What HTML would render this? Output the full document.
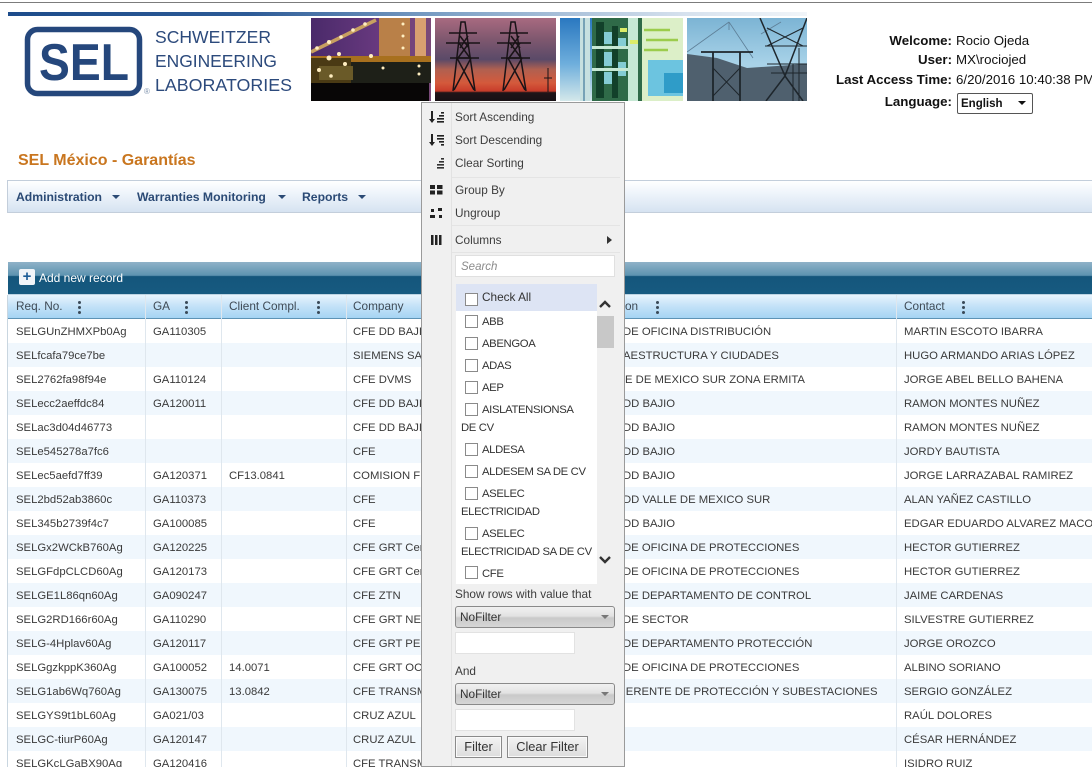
<!DOCTYPE html>
<html lang="es"><head><meta charset="utf-8"><title>SEL México - Garantías</title>
<style>
html,body{margin:0;padding:0;width:1092px;height:767px;overflow:hidden;background:#fff;position:relative;font-family:"Liberation Sans",sans-serif;color:#333}
.abs,.abs *{box-sizing:border-box}
.abs{position:absolute}
.u{position:absolute;font-size:13.3px;line-height:16px;color:#111;white-space:nowrap}
.u.l{font-weight:bold;right:calc(1092px - 952px)}
.u.v{left:956px}
.mi{position:absolute;left:0;top:0;font-size:12.2px;font-weight:bold;color:#2b4a75;white-space:nowrap;line-height:16px}
.tri{position:absolute;width:0;height:0;border-left:4px solid transparent;border-right:4px solid transparent;border-top:4px solid #2b4a75}
.r{position:absolute;left:8px;width:1084px;height:24px;background:#fff;overflow:hidden}
.r.t{background:#f0f7fd}
.r i{position:absolute;top:1px;font-style:normal;font-size:11.3px;line-height:24px;color:#3a3a3a;white-space:nowrap}
.r .a{left:8px}.r .b{left:145px}.r .c{left:221px}.r .d{left:345px}.r .f{left:896px}
.vl{position:absolute;top:295px;height:472px;width:1px;background:#dfe7ee}
.hc{position:absolute;top:295px;height:24px;line-height:22px;font-size:11.8px;color:#3f4a55;white-space:nowrap}
.dots{position:absolute;top:301px;width:3px;height:13px}
.dots b{display:block;width:3px;height:3px;border-radius:50%;background:#3a4a58;margin-bottom:2px}
.m{position:absolute;left:33px;font-size:11.8px;line-height:16px;color:#3d3d3d;white-space:nowrap}
.li{position:absolute;font-size:11.3px;letter-spacing:-.35px;line-height:16px;color:#333;white-space:nowrap}
.cb{position:absolute;width:13px;height:13px;border:1px solid #8a8a8a;background:#fff}
.sel{position:absolute;left:33px;width:160px;height:22px;border:1px solid #8a8a8a;border-radius:3px;background:linear-gradient(#f1f1f1,#e2e2e2 45%,#c9c9c9 55%,#d6d6d6);font-size:11.8px;line-height:20px;padding-left:4px;color:#333}
.sel:after{content:"";position:absolute;right:5px;top:8px;border-left:4px solid transparent;border-right:4px solid transparent;border-top:4px solid #777}
.inp{position:absolute;left:33px;width:120px;height:22px;background:#fff;border:1px solid #e2e2e2}
.btn{position:absolute;top:633px;height:22px;border:1px solid #8a8a8a;background:linear-gradient(#f3f3f3,#dcdcdc);box-shadow:inset 0 0 0 1px #fafafa;font-size:12.8px;line-height:20px;text-align:center;color:#333}
</style></head><body>

<div class="abs" style="left:0;top:2px;width:1092px;height:1px;background:#7c7c7c"></div>
<div class="abs" style="left:8px;top:12px;width:799px;height:4px;background:linear-gradient(90deg,#1d4c8b,#2c5a96 30%,#7ea1c6 55%,#d7e2ee 85%,#f1f5f9)"></div>

<svg class="abs" style="left:20px;top:22px" width="280" height="78" viewBox="0 0 280 78">
<rect x="7.500" y="7.500" width="112" height="64" rx="10" fill="#fff" stroke="#25477c" stroke-width="5.500"/>
<text x="19" y="58" font-family="Liberation Sans" font-weight="bold" font-size="52" fill="#25477c" textLength="90" lengthAdjust="spacingAndGlyphs">SEL</text>
<text x="124" y="72" font-family="Liberation Sans" font-size="8" fill="#7f93ad">®</text>
<g font-family="Liberation Sans" font-size="17.500" fill="#2c4a7c">
<text x="135" y="21" textLength="116" lengthAdjust="spacingAndGlyphs">SCHWEITZER</text>
<text x="135" y="45" textLength="122" lengthAdjust="spacingAndGlyphs">ENGINEERING</text>
<text x="135" y="69" textLength="137" lengthAdjust="spacingAndGlyphs">LABORATORIES</text>
</g></svg>

<svg class="abs" style="left:311px;top:18px" width="120" height="83" viewBox="0 0 120 83">
<defs><linearGradient id="p1" x1="0" y1="0" x2="1" y2="0"><stop offset="0" stop-color="#4a2a6a"/><stop offset=".6" stop-color="#6a3a80"/><stop offset="1" stop-color="#7a4a78"/></linearGradient></defs>
<rect width="120" height="83" fill="url(#p1)"/>
<rect x="68" y="0" width="31" height="40" fill="#b98048"/><rect x="104" y="0" width="11" height="38" fill="#d8a070"/>
<path d="M0 34L65 2" stroke="#c8a060" stroke-width="3.500"/>
<rect x="0" y="38" width="120" height="7" fill="#a8701e"/>
<rect x="0" y="40" width="40" height="25" fill="#4a3a14"/>
<rect x="40" y="44" width="80" height="21" fill="#1e2018"/>
<rect x="8" y="48" width="34" height="14" fill="#6a5a28"/>
<g fill="#ffeec0"><circle cx="6" cy="30" r="1.800"/><circle cx="18" cy="24" r="2"/><circle cx="30" cy="19" r="1.800"/><circle cx="42" cy="12" r="1.800"/><circle cx="54" cy="6" r="1.800"/><circle cx="18" cy="40" r="2.500"/><circle cx="28" cy="36" r="2"/><circle cx="34" cy="46" r="2"/><circle cx="8" cy="52" r="2"/><circle cx="20" cy="58" r="1.800"/><circle cx="60" cy="38" r="2"/><circle cx="108" cy="56" r="1.500"/><circle cx="108" cy="48" r="1.500"/><circle cx="92" cy="6" r="1.500"/><circle cx="92" cy="18" r="1.500"/><circle cx="92" cy="30" r="1.500"/><circle cx="72" cy="50" r="1.500"/></g>
<rect x="0" y="65" width="118" height="18" fill="#080606"/>
</svg>

<svg class="abs" style="left:435px;top:18px" width="121" height="83" viewBox="0 0 121 83">
<defs><linearGradient id="p2" x1="0" y1="0" x2="0" y2="1"><stop offset="0" stop-color="#a86a80"/><stop offset=".25" stop-color="#80586f"/><stop offset=".5" stop-color="#5a4a68"/><stop offset=".62" stop-color="#b06050"/><stop offset=".78" stop-color="#d45a3c"/><stop offset=".88" stop-color="#c83c2a"/><stop offset=".9" stop-color="#201418"/><stop offset="1" stop-color="#181014"/></linearGradient></defs>
<rect width="121" height="83" fill="url(#p2)"/>
<g fill="none" stroke="#191317" stroke-width="1.500">
<path d="M18 73L26 4h4L40 73M19 72L36 40M39 72L22 40M22 40h14M24 25L35 40M34 25L23 40M25 18L34 30M33 18L25 30"/>
<path d="M14 15h28M11 25h34M15 40h29"/>
<path d="M68 73L76 4h4L91 73M69 72L87 40M90 72L73 40M73 40h14M75 25L86 40M85 25L74 40M76 18L85 30M84 18L76 30"/>
<path d="M65 15h28M62 25h34M66 40h29"/>
<path d="M113 50v24M109 60h8" stroke-width="1"/>
</g>
</svg>

<svg class="abs" style="left:560px;top:18px" width="123" height="83" viewBox="0 0 123 83">
<defs><linearGradient id="p3" x1="0" y1="0" x2="0" y2="1"><stop offset="0" stop-color="#2a78c0"/><stop offset=".55" stop-color="#6eaedc"/><stop offset="1" stop-color="#d4e8ea"/></linearGradient></defs>
<rect width="123" height="83" fill="url(#p3)"/>
<rect x="82" y="0" width="41" height="83" fill="#dcefc8"/>
<rect x="88" y="42" width="35" height="36" fill="#6cc4e0"/>
<rect x="104" y="55" width="19" height="20" fill="#2f9cc8"/>
<path d="M84 12h26M86 22h32M84 32h24" stroke="#9ccc4c" stroke-width="2.500"/>
<rect x="20" y="0" width="10" height="83" fill="#c6e0e0"/>
<path d="M24 0v83" stroke="#5c8ea8" stroke-width="1.500"/>
<rect x="32" y="0" width="50" height="83" fill="#2f6a48"/>
<g fill="#12402a"><rect x="36" y="4" width="8" height="76"/><rect x="52" y="8" width="6" height="72"/></g>
<g fill="#84ccd4"><rect x="44" y="14" width="8" height="12"/><rect x="44" y="34" width="8" height="14"/><rect x="58" y="20" width="8" height="10"/><rect x="44" y="54" width="8" height="12"/><rect x="58" y="44" width="8" height="14"/></g>
<g fill="#c6e8d4"><rect x="32" y="28" width="40" height="3"/><rect x="32" y="50" width="40" height="3"/><rect x="68" y="0" width="10" height="83"/></g>
<g fill="#dcec68"><rect x="60" y="10" width="7" height="4"/><rect x="70" y="22" width="8" height="4"/></g>
</svg>

<svg class="abs" style="left:687px;top:18px" width="120" height="83" viewBox="0 0 120 83">
<defs><linearGradient id="p4" x1="0" y1="0" x2="0" y2="1"><stop offset="0" stop-color="#7cb4d4"/><stop offset=".55" stop-color="#a8d2e8"/></linearGradient></defs>
<rect width="120" height="83" fill="url(#p4)"/>
<path d="M0 36L30 40 60 50 90 48 120 46V83H0Z" fill="#4f606e"/>
<path d="M0 34L42 4M42 4L42 12M94 4l-20 12M66 40L42 4" fill="none" stroke="#5e7f97" stroke-width=".8"/>
<g fill="none" stroke="#1e262c"><path stroke-width="1.800" d="M14 34h52M26 34v49M53 34v49"/><path stroke-width="1" d="M26 78L53 50M53 78L26 50"/>
<path stroke-width="1.500" d="M73 0l25 58M120 0L98 58M98 58L79 83M98 58l18 25"/>
<path stroke-width="1" d="M78 28h42M80 46h40M84 55h36M80 10l36 18M116 10L80 28M106 46v37M112 30v53"/></g>
</svg>

<div class="u l" style="top:33px">Welcome:</div><div class="u v" style="top:33px">Rocio Ojeda</div>
<div class="u l" style="top:52px">User:</div><div class="u v" style="top:52px">MX\rociojed</div>
<div class="u l" style="top:72px">Last Access Time:</div><div class="u v" style="top:72px">6/20/2016 10:40:38 PM</div>
<div class="u l" style="top:94px">Language:</div>
<div class="abs" style="left:957px;top:93px;width:76px;height:21px;border:1px solid #555;border-radius:2px;background:#fff;font-size:11.500px;font-weight:bold;line-height:20px;padding-left:3px;color:#111">English<span class="tri" style="left:60px;top:7px;border-top-color:#111"></span></div>

<div class="abs" style="left:18px;top:152px;font-size:16px;font-weight:bold;line-height:17px;color:#c9761f;white-space:nowrap">SEL México - Garantías</div>

<div class="abs" style="left:7px;top:180px;width:1085px;height:33px;border:1px solid #c3cedb;border-right:0;background:linear-gradient(#fff,#eef4fb 40%,#d6e3f1)"></div>
<div class="mi" style="left:16px;top:189px">Administration</div><span class="tri" style="left:112px;top:195px"></span>
<div class="mi" style="left:137px;top:189px">Warranties Monitoring</div><span class="tri" style="left:278px;top:195px"></span>
<div class="mi" style="left:302px;top:189px">Reports</div><span class="tri" style="left:358px;top:195px"></span>

<div class="abs" style="left:8px;top:262px;width:1084px;height:33px;background:linear-gradient(#8fb2c8 0,#5d93b0 42%,#14567c 45%,#175a80 100%);border-bottom:1px solid #bcd3e2"></div>
<div class="abs" style="left:19px;top:269px;width:16px;height:16px;border-radius:2px;background:#f1f4f8;color:#1d5c96;font-size:15px;font-weight:bold;line-height:15px;text-align:center">+</div>
<div class="abs" style="left:39px;top:270px;font-size:12px;line-height:16px;color:#fff;white-space:nowrap">Add new record</div>

<div class="abs" style="left:8px;top:295px;width:1084px;height:24px;background:linear-gradient(#e8f4fd,#c6e3f8 45%,#a5d4f3);border-bottom:1px solid #5d93b5"></div>
<div class="hc" style="left:16px">Req. No.</div><div class="dots" style="left:78px"><b></b><b></b><b></b></div>
<div class="hc" style="left:153px">GA</div><div class="dots" style="left:185px"><b></b><b></b><b></b></div>
<div class="hc" style="left:229px">Client Compl.</div><div class="dots" style="left:317px"><b></b><b></b><b></b></div>
<div class="hc" style="left:353px">Company</div>
<div class="hc" style="left:625px">on</div><div class="dots" style="left:656px"><b></b><b></b><b></b></div>
<div class="hc" style="left:904px">Contact</div><div class="dots" style="left:962px"><b></b><b></b><b></b></div>

<div class="r" style="top:319px"><i class="a">SELGUnZHMXPb0Ag</i><i class="b">GA110305</i><i class="d">CFE DD BAJIO</i><i style="left:615px">DE OFICINA DISTRIBUCIÓN</i><i class="f">MARTIN ESCOTO IBARRA</i></div>
<div class="r t" style="top:343px"><i class="a">SELfcafa79ce7be</i><i class="d">SIEMENS SA</i><i style="left:615px">AESTRUCTURA Y CIUDADES</i><i class="f">HUGO ARMANDO ARIAS LÓPEZ</i></div>
<div class="r" style="top:367px"><i class="a">SEL2762fa98f94e</i><i class="b">GA110124</i><i class="d">CFE DVMS</i><i style="left:617px">E DE MEXICO SUR ZONA ERMITA</i><i class="f">JORGE ABEL BELLO BAHENA</i></div>
<div class="r t" style="top:391px"><i class="a">SELecc2aeffdc84</i><i class="b">GA120011</i><i class="d">CFE DD BAJIO</i><i style="left:615px">DD BAJIO</i><i class="f">RAMON MONTES NUÑEZ</i></div>
<div class="r" style="top:415px"><i class="a">SELac3d04d46773</i><i class="d">CFE DD BAJIO</i><i style="left:615px">DD BAJIO</i><i class="f">RAMON MONTES NUÑEZ</i></div>
<div class="r t" style="top:439px"><i class="a">SELe545278a7fc6</i><i class="d">CFE</i><i style="left:615px">DD BAJIO</i><i class="f">JORDY BAUTISTA</i></div>
<div class="r" style="top:463px"><i class="a">SELec5aefd7ff39</i><i class="b">GA120371</i><i class="c">CF13.0841</i><i class="d">COMISION F</i><i style="left:615px">DD BAJIO</i><i class="f">JORGE LARRAZABAL RAMIREZ</i></div>
<div class="r t" style="top:487px"><i class="a">SEL2bd52ab3860c</i><i class="b">GA110373</i><i class="d">CFE</i><i style="left:615px">DD VALLE DE MEXICO SUR</i><i class="f">ALAN YAÑEZ CASTILLO</i></div>
<div class="r" style="top:511px"><i class="a">SEL345b2739f4c7</i><i class="b">GA100085</i><i class="d">CFE</i><i style="left:615px">DD BAJIO</i><i class="f">EDGAR EDUARDO ALVAREZ MACOTELA</i></div>
<div class="r t" style="top:535px"><i class="a">SELGx2WCkB760Ag</i><i class="b">GA120225</i><i class="d">CFE GRT Cen</i><i style="left:615px">DE OFICINA DE PROTECCIONES</i><i class="f">HECTOR GUTIERREZ</i></div>
<div class="r" style="top:559px"><i class="a">SELGFdpCLCD60Ag</i><i class="b">GA120173</i><i class="d">CFE GRT Cen</i><i style="left:615px">DE OFICINA DE PROTECCIONES</i><i class="f">HECTOR GUTIERREZ</i></div>
<div class="r t" style="top:583px"><i class="a">SELGE1L86qn60Ag</i><i class="b">GA090247</i><i class="d">CFE ZTN</i><i style="left:615px">DE DEPARTAMENTO DE CONTROL</i><i class="f">JAIME CARDENAS</i></div>
<div class="r" style="top:607px"><i class="a">SELG2RD166r60Ag</i><i class="b">GA110290</i><i class="d">CFE GRT NE</i><i style="left:615px">DE SECTOR</i><i class="f">SILVESTRE GUTIERREZ</i></div>
<div class="r t" style="top:631px"><i class="a">SELG-4Hplav60Ag</i><i class="b">GA120117</i><i class="d">CFE GRT PEN</i><i style="left:615px">DE DEPARTAMENTO PROTECCIÓN</i><i class="f">JORGE OROZCO</i></div>
<div class="r" style="top:655px"><i class="a">SELGgzkppK360Ag</i><i class="b">GA100052</i><i class="c">14.0071</i><i class="d">CFE GRT OCC</i><i style="left:615px">DE OFICINA DE PROTECCIONES</i><i class="f">ALBINO SORIANO</i></div>
<div class="r t" style="top:679px"><i class="a">SELG1ab6Wq760Ag</i><i class="b">GA130075</i><i class="c">13.0842</i><i class="d">CFE TRANSM</i><i style="left:609px">GERENTE DE PROTECCIÓN Y SUBESTACIONES</i><i class="f">SERGIO GONZÁLEZ</i></div>
<div class="r" style="top:703px"><i class="a">SELGYS9t1bL60Ag</i><i class="b">GA021/03</i><i class="d">CRUZ AZUL</i><i class="f">RAÚL DOLORES</i></div>
<div class="r t" style="top:727px"><i class="a">SELGC-tiurP60Ag</i><i class="b">GA120147</i><i class="d">CRUZ AZUL</i><i class="f">CÉSAR HERNÁNDEZ</i></div>
<div class="r" style="top:751px"><i class="a">SELGKcLGaBX90Ag</i><i class="b">GA120416</i><i class="d">CFE TRANSM</i><i class="f">ISIDRO RUIZ</i></div>

<div class="vl" style="left:7px;background:#c9d6e0"></div>
<div class="vl" style="left:145px"></div><div class="vl" style="left:221px"></div><div class="vl" style="left:346px"></div><div class="vl" style="left:896px"></div>

<!-- Context menu -->
<div class="abs" style="left:421px;top:102px;width:204px;height:665px;background:#f0f0f0;border:1px solid #9a9a9a;overflow:hidden">
<div class="abs" style="left:29px;top:0;width:1px;height:665px;background:#e2e2e2"></div>

<svg class="abs" style="left:6px;top:6px" width="18" height="140" viewBox="0 0 18 140" fill="#222" stroke="none">
<path d="M3 2h2v8h2l-3 4-3-4h2z"/><path d="M13 3h3v1.600h-3zM11 6h5v1.600h-5zM9 9h7v1.600H9zM9 12h7v1.600H9z"/>
<path d="M3 25h2v8h2l-3 4-3-4h2z"/><path d="M9 26h7v1.600H9zM9 29h7v1.600H9zM11 32h5v1.600h-5zM13 35h3v1.600h-3z"/>
<path d="M13 49h3v1.600h-3zM11 52h5v1.600h-5zM9 55h7v1.600H9zM9 58h7v1.600H9z" fill="#333"/>
<path d="M2 76h5v4H2zM9 76h5.500v4H9zM2 81.500h5v4H2zM9 81.500h5.500v4H9z"/>
<path d="M3 100h3v3H3zM10 99h4v3h-4zM2 106h5v3H2zM11 106h3v3h-3z"/>
<path d="M3 126h2.500v10H3zM7 126h2.500v10H7zM11 126h2.500v10H11z"/>
</svg>

<div class="m" style="top:6px">Sort Ascending</div>
<div class="m" style="top:29px">Sort Descending</div>
<div class="m" style="top:52px">Clear Sorting</div>
<div class="abs" style="left:30px;top:74px;width:168px;height:1px;background:#e4e4e4"></div>
<div class="m" style="top:79px">Group By</div>
<div class="m" style="top:102px">Ungroup</div>
<div class="abs" style="left:30px;top:122px;width:168px;height:1px;background:#e4e4e4"></div>
<div class="m" style="top:129px">Columns</div>
<div class="abs" style="left:185px;top:133px;border-top:4px solid transparent;border-bottom:4px solid transparent;border-left:5px solid #333"></div>
<div class="abs" style="left:30px;top:149px;width:168px;height:1px;background:#e4e4e4"></div>

<div class="abs" style="left:33px;top:152px;width:160px;height:22px;background:#fff;border:1px solid #e0e0e0;padding-left:5px;font-size:11.500px;font-style:italic;line-height:22px;color:#8a8a8a">Search</div>

<div class="abs" style="left:34px;top:181px;width:159px;height:300px;background:#fff"></div>
<div class="abs" style="left:34px;top:181px;width:141px;height:27px;background:#dde4f4"></div>
<div class="abs" style="left:175px;top:181px;width:18px;height:300px;background:#f0f0f0"></div>
<div class="abs" style="left:175px;top:213px;width:17px;height:32px;background:#c8c8c8"></div>
<svg class="abs" style="left:176px;top:194px" width="14" height="14" viewBox="0 0 14 14"><path d="M2 10L7 5l5 5" fill="none" stroke="#333" stroke-width="2.400"/></svg>
<svg class="abs" style="left:176px;top:450px" width="14" height="14" viewBox="0 0 14 14"><path d="M2 4l5 5 5-5" fill="none" stroke="#333" stroke-width="2.400"/></svg>

<div class="cb" style="left:43px;top:190px"></div><div class="li" style="left:60px;top:186px;font-size:11.8px;letter-spacing:0">Check All</div>
<div class="cb" style="left:43px;top:212px"></div><div class="li" style="left:60px;top:211px">ABB</div>
<div class="cb" style="left:43px;top:234px"></div><div class="li" style="left:60px;top:233px">ABENGOA</div>
<div class="cb" style="left:43px;top:256px"></div><div class="li" style="left:60px;top:255px">ADAS</div>
<div class="cb" style="left:43px;top:278px"></div><div class="li" style="left:60px;top:277px">AEP</div>
<div class="cb" style="left:43px;top:300px"></div><div class="li" style="left:60px;top:299px">AISLATENSIONSA</div>
<div class="li" style="left:39px;top:317px">DE CV</div>
<div class="cb" style="left:43px;top:340px"></div><div class="li" style="left:60px;top:339px">ALDESA</div>
<div class="cb" style="left:43px;top:362px"></div><div class="li" style="left:60px;top:361px">ALDESEM SA DE CV</div>
<div class="cb" style="left:43px;top:384px"></div><div class="li" style="left:60px;top:383px">ASELEC</div>
<div class="li" style="left:39px;top:401px">ELECTRICIDAD</div>
<div class="cb" style="left:43px;top:424px"></div><div class="li" style="left:60px;top:423px">ASELEC</div>
<div class="li" style="left:39px;top:441px">ELECTRICIDAD SA DE CV</div>
<div class="cb" style="left:43px;top:463px"></div><div class="li" style="left:60px;top:463px">CFE</div>

<div class="m" style="top:483px">Show rows with value that</div>
<div class="sel" style="top:503px">NoFilter</div>
<div class="inp" style="top:529px"></div>
<div class="m" style="top:560px">And</div>
<div class="sel" style="top:580px">NoFilter</div>
<div class="inp" style="top:606px"></div>
<div class="btn" style="left:33px;width:47px;top:633px">Filter</div>
<div class="btn" style="left:85px;width:81px;top:633px">Clear Filter</div>
</div>
</body></html>
